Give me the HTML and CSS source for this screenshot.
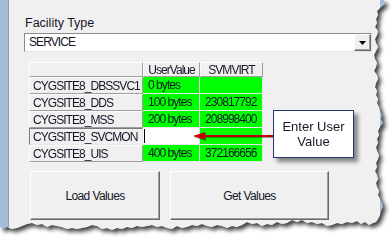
FILE: index.html
```html
<!DOCTYPE html>
<html lang="en">
<head>
  <meta charset="UTF-8" />
  <title>Facility Values</title>
  <link rel="stylesheet" href="styles.css">
</head>
<body>
  <div class="page">
    <div class="window">
      <div class="panel">
        <div class="field-label">Facility Type</div>
        <div class="combo">
          <span class="combo-text">SERVICE</span>
          <span class="combo-btn">
            <svg width="7" height="4" viewBox="0 0 7 4"><polygon points="0,0 7,0 3.5,4" fill="#000"/></svg>
          </span>
        </div>

        <div class="grid">
          <div class="cell head corner"></div>
          <div class="cell head col-head">UserValue</div>
          <div class="cell head col-head">SVMVIRT</div>

          <div class="cell head row-head">CYGSITE8_DBSSVC1</div>
          <div class="cell val">0 bytes</div>
          <div class="cell val"></div>

          <div class="cell head row-head">CYGSITE8_DDS</div>
          <div class="cell val">100 bytes</div>
          <div class="cell val">230817792</div>

          <div class="cell head row-head">CYGSITE8_MSS</div>
          <div class="cell val">200 bytes</div>
          <div class="cell val">208998400</div>

          <div class="cell head row-head active">CYGSITE8_SVCMON</div>
          <div class="cell val edit"><span class="caret"></span></div>
          <div class="cell val"></div>

          <div class="cell head row-head">CYGSITE8_UIS</div>
          <div class="cell val">400 bytes</div>
          <div class="cell val">372166656</div>
        </div>

        <div class="buttons">
          <button class="btn btn-load">Load Values</button>
          <button class="btn btn-get">Get Values</button>
        </div>

        <svg class="arrow" width="81" height="12" viewBox="0 0 81 12">
          <line x1="12" y1="6" x2="81" y2="6" stroke="#c00000" stroke-width="2"/>
          <polygon points="1,6 13,2 13,10" fill="#c00000"/>
        </svg>
        <div class="callout">Enter User<br>Value</div>
      </div>
    </div>
  </div>
</body>
</html>
```

FILE: styles.css
```css
body {
  margin: 0;
  background-color: #fff;
  font-family: "Liberation Sans", Arial, sans-serif;
  color: #161628;
}
.page {
  width: 391px;
  height: 240px;
  filter: drop-shadow(3px 3px 2px rgba(0, 0, 0, 0.75));
}
/* torn screenshot edge on the right and bottom */
.window {
  display: flex;
  height: 240px;
  box-sizing: border-box;
  padding: 0 11px 0 8px;
  background-color: #a4bddb;
  clip-path: polygon(0px 0px, 384px 0px, 385px 4px, 380px 8px, 377px 11px, 378px 15px, 376px 19px, 377px 23px, 375px 27px, 378px 31px, 377px 35px, 375px 39px, 376px 43px, 378px 47px, 376px 51px, 374px 55px, 375px 59px, 377px 63px, 376px 67px, 374px 71px, 377px 75px, 378px 79px, 376px 83px, 375px 87px, 377px 91px, 376px 95px, 378px 99px, 377px 103px, 379px 107px, 380px 111px, 382px 115px, 381px 119px, 383px 123px, 380px 127px, 378px 131px, 379px 135px, 377px 139px, 378px 143px, 376px 147px, 377px 151px, 379px 155px, 378px 159px, 376px 163px, 377px 167px, 375px 171px, 377px 175px, 378px 179px, 376px 183px, 377px 187px, 379px 191px, 378px 195px, 380px 199px, 382px 203px, 383px 207px, 381px 211px, 380px 215px, 378px 219px, 376px 222px, 373px 223px, 369px 225px, 365px 222px, 361px 224px, 357px 221px, 352px 223px, 347px 222px, 342px 224px, 337px 223px, 332px 225px, 327px 226px, 322px 223px, 317px 224px, 312px 222px, 307px 223px, 302px 220px, 297px 222px, 292px 220px, 287px 223px, 282px 224px, 277px 222px, 272px 225px, 267px 224px, 262px 226px, 257px 223px, 252px 224px, 247px 222px, 242px 225px, 237px 227px, 232px 226px, 227px 228px, 222px 226px, 217px 225px, 212px 227px, 207px 226px, 202px 224px, 197px 226px, 192px 225px, 187px 227px, 182px 228px, 177px 226px, 172px 229px, 167px 228px, 162px 226px, 157px 227px, 152px 225px, 147px 226px, 142px 227px, 137px 226px, 132px 228px, 127px 227px, 122px 229px, 117px 228px, 112px 230px, 107px 228px, 102px 229px, 97px 226px, 92px 225px, 87px 227px, 82px 228px, 77px 229px, 72px 228px, 67px 229px, 62px 227px, 57px 226px, 52px 225px, 47px 227px, 42px 224px, 37px 225px, 32px 223px, 27px 224px, 22px 226px, 17px 228px, 12px 229px, 7px 227px, 3px 229px, 0px 227px);
}
.panel {
  flex: 1;
  position: relative;
  background-color: #f0f0f0;
  border-left: 1px solid #9a9a9a;
  padding: 16px 0 0 15px;
}
.field-label {
  font-size: 12.5px;
  line-height: 14px;
  padding-left: 1px;
}
.combo {
  display: flex;
  width: 348px;
  height: 19px;
  margin-top: 3px;
  box-sizing: border-box;
  background-color: #fff;
  border: 1px solid;
  border-color: #8c8c8c #e3e3e3 #e3e3e3 #8c8c8c;
}
.combo-text {
  flex: 1;
  padding-left: 4px;
  font-size: 12px;
  line-height: 17px;
  letter-spacing: -0.9px;
}
.combo-btn {
  display: flex;
  align-items: center;
  justify-content: center;
  width: 17px;
  box-sizing: border-box;
  background-color: #f0f0f0;
  border: 1px solid;
  border-color: #fff #696969 #696969 #fff;
  box-shadow: inset -1px -1px #a0a0a0;
}
.grid {
  display: grid;
  grid-template-columns: 114px 57px 63px;
  grid-template-rows: 15px repeat(5, 17px);
  width: max-content;
  margin: 10px 0 0 5px;
  font-size: 12px;
  letter-spacing: -0.95px;
}
.cell {
  display: flex;
  align-items: center;
  box-sizing: border-box;
  padding-left: 3px;
  white-space: nowrap;
  overflow: hidden;
}
.head {
  background-color: #f0f0f0;
  border: 1px solid;
  border-color: #fcfcfc #a0a0a0 #a0a0a0 #fcfcfc;
}
.col-head {
  justify-content: center;
  padding-left: 0;
}
.row-head.active {
  border-color: #7a7a7a #e8e8e8 #e8e8e8 #7a7a7a;
}
.val {
  background-color: #00ff00;
  border-right: 1px solid #e6e6e6;
  border-bottom: 1px solid #e6e6e6;
  padding-left: 5px;
}
.val.edit {
  background-color: #fff;
  padding-left: 1px;
}
.caret {
  width: 1px;
  height: 14px;
  background-color: #000;
}
.buttons {
  display: flex;
  gap: 10px;
  margin: 9px 0 0 6px;
}
.btn {
  height: 49px;
  padding: 0;
  font-family: "Liberation Sans", Arial, sans-serif;
  font-size: 12px;
  letter-spacing: -0.6px;
  color: #161628;
  background-color: #f0f0f0;
  border: 1px solid;
  border-color: #fff #696969 #696969 #fff;
  box-shadow: inset -1px -1px #a0a0a0;
}
.btn-load {
  width: 130px;
}
.btn-get {
  width: 159px;
}
.arrow {
  position: absolute;
  left: 183px;
  top: 130px;
  filter: drop-shadow(1px 1px 0.5px rgba(0, 0, 0, 0.35));
}
.callout {
  position: absolute;
  left: 264px;
  top: 110px;
  width: 81px;
  height: 48px;
  box-sizing: border-box;
  display: flex;
  align-items: center;
  justify-content: center;
  text-align: center;
  font-size: 13px;
  line-height: 15px;
  background-color: #fff;
  border: 1px solid #1f3a6e;
  box-shadow: 4px 4px 4px rgba(0, 0, 0, 0.45);
}
```
